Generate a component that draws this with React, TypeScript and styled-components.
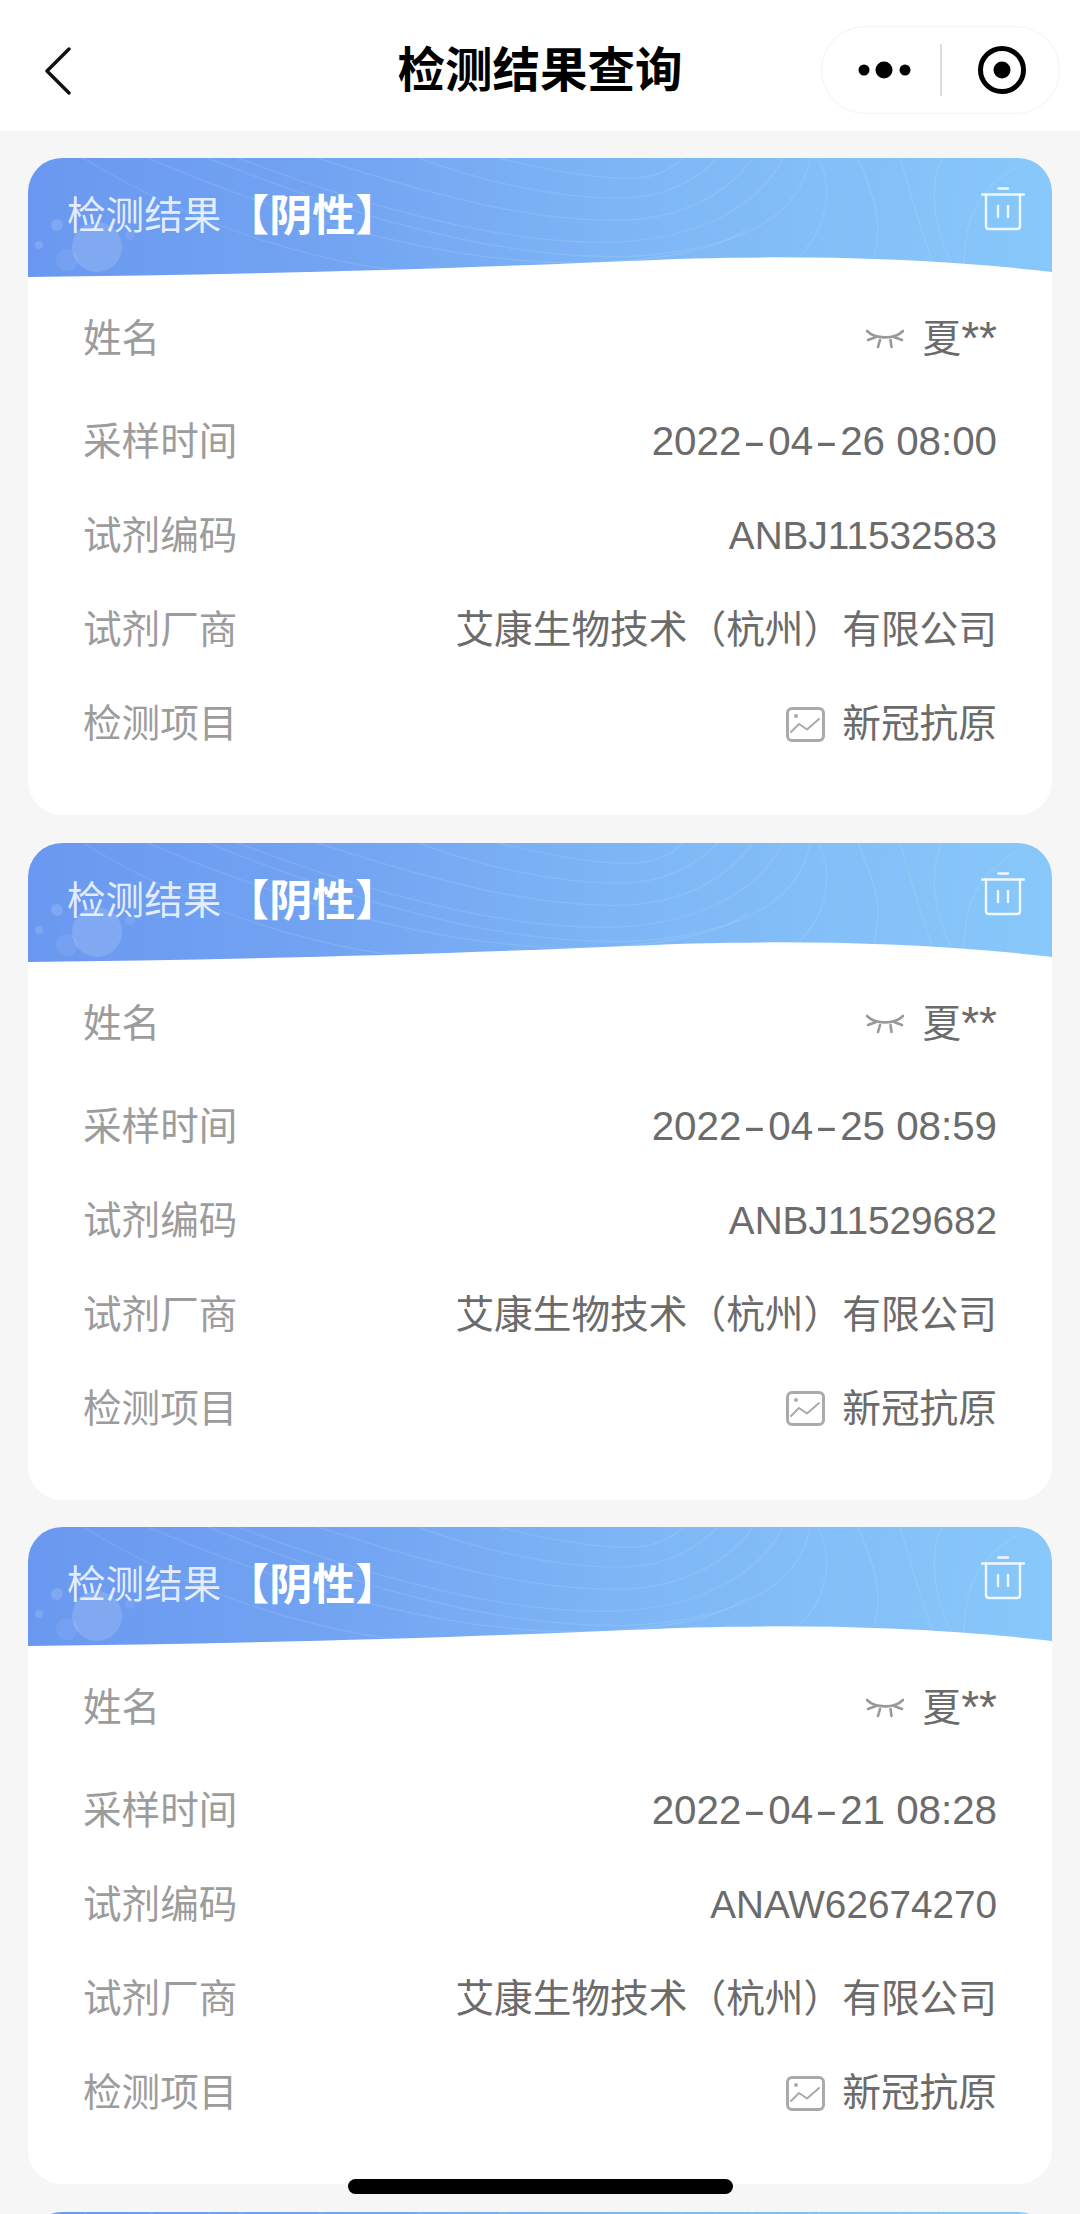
import React from "react";
import styled, { createGlobalStyle } from "styled-components";

const Global = createGlobalStyle`
  html, body { margin: 0; padding: 0; background: #f6f6f6; }
  #root { height: 2214px; overflow: hidden; }
  * { box-sizing: border-box; }
`;

const FONT = `"Liberation Sans", "Noto Sans CJK SC", sans-serif`;

const Page = styled.div`
  position: relative;
  width: 1080px;
  height: 2214px;
  overflow: hidden;
  background: #f6f6f6;
  font-family: ${FONT};
`;

const NavBar = styled.header`
  display: grid;
  grid-template-columns: 1fr auto 1fr;
  align-items: center;
  height: 131px;
  padding: 10px 20px 0 20px;
  background: #ffffff;
`;

const BackIcon = styled.svg`
  display: block;
  width: 28px;
  height: 48px;
  margin-left: 24px;
`;

const NavTitle = styled.h1`
  margin: 0;
  font-size: 47.5px;
  line-height: 56px;
  font-weight: 700;
  color: #000000;
`;

const Capsule = styled.div`
  justify-self: end;
  display: flex;
  align-items: center;
  width: 239px;
  height: 88px;
  margin-top: -2px;
  padding-left: 35px;
  border: 1.5px solid #f3f3f3;
  border-radius: 44px;
  background: #ffffff;
`;

const Dots = styled.svg`
  display: block;
  width: 54px;
  height: 18px;
  margin-right: 29px;
`;

const Divider = styled.span`
  display: block;
  width: 1.5px;
  height: 52px;
  background: #dddddd;
`;

const Target = styled.svg`
  display: block;
  width: 48px;
  height: 48px;
  margin-left: 36px;
`;

const List = styled.main`
  display: flex;
  flex-direction: column;
  gap: 27.5px;
  padding: 27px 28px 0;
`;

const Card = styled.article`
  flex: none;
  height: 657px;
  border-radius: 34px;
  background: #ffffff;
  overflow: hidden;
`;

const CardHeader = styled.div`
  position: relative;
  display: flex;
  justify-content: space-between;
  align-items: flex-start;
  height: 120px;
  padding: 29px 27px 0 39px;
  background: linear-gradient(92deg, #6a98f0 0%, #72a4f2 30%, #7fb8f6 62%, #88c8fa 100%);
`;

const HeaderArt = styled.svg`
  position: absolute;
  left: 0;
  top: 0;
  width: 100%;
  height: 100%;
`;

const CardTitle = styled.div`
  position: relative;
  display: flex;
  align-items: center;
  height: 56px;
  margin-top: -3px;
  color: rgba(255, 255, 255, 0.82);
  font-size: 38.6px;
  font-weight: 400;
`;

const Verdict = styled.strong`
  margin-left: 5px;
  color: #ffffff;
  font-size: 43px;
  font-weight: 700;
`;

const Trash = styled.svg`
  position: relative;
  display: block;
  width: 44px;
  height: 44px;
`;

const CardBody = styled.dl`
  display: flex;
  flex-direction: column;
  margin: 0;
  padding: 14px 55px 0 55px;
`;

const Row = styled.div<{ $first?: boolean }>`
  display: flex;
  justify-content: space-between;
  align-items: center;
  height: 94px;
  margin-bottom: ${(p) => (p.$first ? "9px" : "0")};
`;

const Label = styled.dt`
  color: #9c9c9c;
  font-size: 38.6px;
  line-height: 46px;
`;

const Value = styled.dd`
  display: flex;
  align-items: center;
  margin: 0;
  color: #6b6b6b;
  font-size: 38.7px;
  line-height: 46px;
  white-space: nowrap;
`;

const Masked = styled.span`
  display: block;
`;

const Stars = styled.span`
  font-size: 46px;
  line-height: 0;
  vertical-align: -2px;
`;

const Stamp = styled.span`
  font-size: 40.3px;
`;

const Dash = styled.span`
  display: inline-block;
  width: 27px;
  text-align: center;
  transform: scaleX(1.7);
`;

const EyeIcon = styled.svg`
  display: block;
  width: 38px;
  height: 20px;
  margin-right: 19px;
`;

const PicIcon = styled.svg`
  display: block;
  width: 39px;
  height: 35px;
  margin-right: 17px;
`;

const HomeBar = styled.div`
  position: absolute;
  left: 348px;
  top: 2179px;
  width: 385px;
  height: 15px;
  border-radius: 8px;
  background: #000000;
`;

const CONTOURS = [
  "M55 0 C170 70 300 112 430 118",
  "M120 0 C260 60 430 112 580 104 C640 100 690 92 720 70",
  "M210 0 C340 50 480 88 590 84 C670 80 730 50 755 0",
  "M290 0 C400 36 510 66 600 62 C660 58 700 34 725 0",
  "M390 0 C450 22 530 42 600 40 C640 38 670 20 690 0",
  "M470 0 C520 12 570 22 610 20 C630 18 645 10 655 0",
  "M180 0 C320 56 470 104 610 98 C690 92 770 70 782 0",
  "M790 0 C806 30 800 70 770 100",
  "M830 0 C846 40 856 60 846 100",
  "M872 0 C884 40 892 70 904 102",
  "M914 0 C900 30 906 70 924 106",
  "M990 8 C950 30 936 60 936 108",
];

function HeaderBackdrop() {
  return (
    <HeaderArt viewBox="0 0 1024 120" preserveAspectRatio="none" aria-hidden="true">
      {CONTOURS.map((d) => (
        <path key={d} d={d} fill="none" stroke="#ffffff" strokeOpacity="0.1" strokeWidth="1.4" />
      ))}
      <circle cx="69" cy="89" r="25" fill="#ffffff" fillOpacity="0.15" />
      <circle cx="39" cy="102" r="11" fill="#ffffff" fillOpacity="0.07" />
      <circle cx="29" cy="67" r="6" fill="#ffffff" fillOpacity="0.14" />
      <circle cx="11" cy="87" r="4" fill="#ffffff" fillOpacity="0.14" />
      <circle cx="102" cy="77" r="5" fill="#ffffff" fillOpacity="0.08" />
      <path d="M0 119 C200 117 420 111 600 103 C720 97 880 97 1024 114 L1024 121 L0 121 Z" fill="#ffffff" />
    </HeaderArt>
  );
}

function TrashIcon() {
  return (
    <Trash viewBox="0 0 44 44" fill="none" stroke="#ffffff" strokeOpacity="0.88" strokeWidth="2.4" strokeLinecap="round" strokeLinejoin="round">
      <path d="M17.5 1.5 H27" />
      <path d="M1 7.5 H43" />
      <path d="M5 8 V39 Q5 42 8 42 H36 Q39 42 39 39 V8" />
      <path d="M17 19 V30" />
      <path d="M27 19 V30" />
    </Trash>
  );
}

function Eye() {
  return (
    <EyeIcon viewBox="0 0 38 20" fill="none" stroke="#999999" strokeWidth="2.6" strokeLinecap="round">
      <path d="M1 2 C9 10 28 11 37 2" />
      <path d="M2 11 L10 8" />
      <path d="M36 11 L28 8" />
      <path d="M12 18 L14 11" />
      <path d="M25.5 18 L24.5 11" />
    </EyeIcon>
  );
}

function Pic() {
  return (
    <PicIcon viewBox="0 0 39 35" fill="none" stroke="#aaaaaa" strokeWidth="3" strokeLinejoin="round" strokeLinecap="round">
      <rect x="1.5" y="1.5" width="36" height="32" rx="4.5" />
      <path d="M5 25 L13 17 L21 22.5 L33 12" strokeWidth="2" />
      <circle cx="10" cy="9" r="2" fill="#aaaaaa" stroke="none" />
    </PicIcon>
  );
}

function DateText({ value }: { value: string }) {
  const parts = value.split("-");
  return (
    <Stamp>
      {parts.map((part, i) => (
        <React.Fragment key={part + i}>
          {i > 0 && <Dash>-</Dash>}
          {part}
        </React.Fragment>
      ))}
    </Stamp>
  );
}

const RECORDS = [
  { date: "2022-04-26 08:00", code: "ANBJ11532583" },
  { date: "2022-04-25 08:59", code: "ANBJ11529682" },
  { date: "2022-04-21 08:28", code: "ANAW62674270" },
];

export default function App() {
  return (
    <Page>
      <Global />
      <NavBar>
        <BackIcon viewBox="0 0 28 48" fill="none" stroke="#111111" strokeWidth="3.4" strokeLinecap="round" strokeLinejoin="round">
          <path d="M25 2 L3 24 L25 46" />
        </BackIcon>
        <NavTitle>检测结果查询</NavTitle>
        <Capsule>
          <Dots viewBox="0 0 54 18" fill="#000000">
            <circle cx="7" cy="9" r="5.5" />
            <circle cx="27" cy="9" r="8.5" />
            <circle cx="48" cy="9" r="5.5" />
          </Dots>
          <Divider />
          <Target viewBox="0 0 48 48">
            <circle cx="24" cy="24" r="21.5" fill="none" stroke="#000000" strokeWidth="5" />
            <circle cx="24" cy="24" r="8.5" fill="#000000" />
          </Target>
        </Capsule>
      </NavBar>
      <List>
        {RECORDS.map((r) => (
          <Card key={r.code}>
            <CardHeader>
              <HeaderBackdrop />
              <CardTitle>
                检测结果<Verdict>【阴性】</Verdict>
              </CardTitle>
              <TrashIcon />
            </CardHeader>
            <CardBody>
              <Row $first>
                <Label>姓名</Label>
                <Value>
                  <Eye />
                  <Masked>
                    夏<Stars>**</Stars>
                  </Masked>
                </Value>
              </Row>
              <Row>
                <Label>采样时间</Label>
                <Value>
                  <DateText value={r.date} />
                </Value>
              </Row>
              <Row>
                <Label>试剂编码</Label>
                <Value>{r.code}</Value>
              </Row>
              <Row>
                <Label>试剂厂商</Label>
                <Value>艾康生物技术（杭州）有限公司</Value>
              </Row>
              <Row>
                <Label>检测项目</Label>
                <Value>
                  <Pic />新冠抗原
                </Value>
              </Row>
            </CardBody>
          </Card>
        ))}
        <Card>
          <CardHeader>
            <HeaderBackdrop />
          </CardHeader>
        </Card>
      </List>
      <HomeBar />
    </Page>
  );
}
